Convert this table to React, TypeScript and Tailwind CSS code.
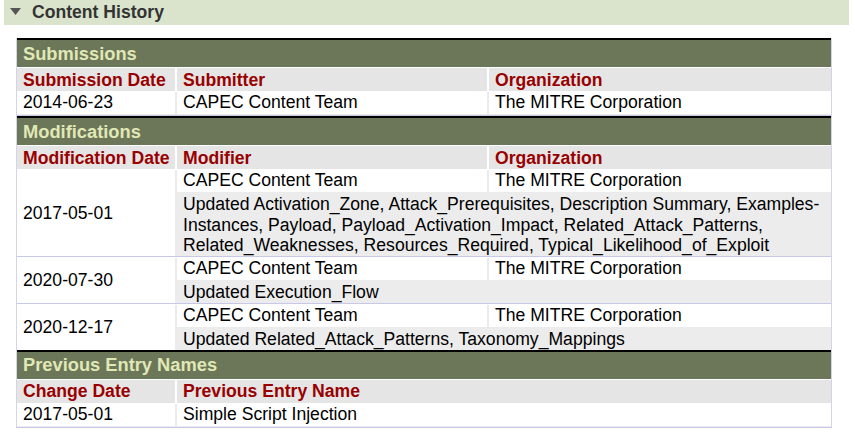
import React from "react";

const HeadCell = ({ children }: { children: React.ReactNode }) => (
  <div className="h-[23px] bg-[#e5e5e5] px-[6px] pt-[1px] flex items-center font-bold text-[#990000] whitespace-nowrap">
    {children}
  </div>
);

const Cell = ({ children, gray }: { children?: React.ReactNode; gray?: boolean }) => (
  <div className={(gray ? "bg-[#ececec]" : "bg-white") + " h-[22px] px-[6px] flex items-start whitespace-nowrap"}>
    {children}
  </div>
);

const Title = ({ children }: { children: React.ReactNode }) => (
  <div className="h-[27px] bg-[#6c7659] px-[6px] pt-[1px] flex items-center font-bold text-[18.3px] text-[#e0e8b6]">
    {children}
  </div>
);

const ModGroup = ({ date, comment, last }: { date: string; comment: string; last?: boolean }) => (
  <div className={"grid grid-cols-[158px_654px] gap-x-[2px] bg-[#ebebeb] " + (last ? "" : "border-b border-[#c8c8e8]")}>
    <div className="bg-white px-[6px] flex items-center">{date}</div>
    <div className="flex flex-col gap-y-[1px]">
      <div className="grid grid-cols-[310px_342px] gap-x-[2px]">
        <Cell>CAPEC Content Team</Cell>
        <Cell>The MITRE Corporation</Cell>
      </div>
      <div className="bg-[#ececec] px-[6px] pt-[1px] leading-[20.5px] min-h-[22px]">{comment}</div>
    </div>
  </div>
);

export default function App() {
  return (
    <div
      className="w-[855px] h-[441px] bg-white overflow-hidden text-black text-[17.6px] leading-[20.5px]"
      style={{ fontFamily: '"Liberation Sans", Arial, sans-serif' }}
    >
      <div className="ml-[4px] w-[845px] h-[25px] bg-[#dae3cb] flex items-center">
        <svg width="11" height="8" viewBox="0 0 11 8" className="ml-[6px] mt-[-2px]">
          <polygon points="0,0 11,0 5.5,7" fill="#555555" />
        </svg>
        <span className="ml-[11px] font-bold text-[#333333]">Content History</span>
      </div>

      <div className="ml-[16px] mt-[13px] w-[816px] border-x border-[#d4d4e6]">
        {/* Submissions */}
        <div className="border-t-2 border-black">
          <Title>Submissions</Title>
          <div className="grid grid-cols-[158px_310px_342px] gap-x-[2px] mt-[1px] bg-white">
            <HeadCell>Submission Date</HeadCell>
            <HeadCell>Submitter</HeadCell>
            <HeadCell>Organization</HeadCell>
          </div>
          <div className="mt-[1px] bg-[#ebebeb] pb-[1px] border-b border-[#c8c8e8]">
            <div className="grid grid-cols-[158px_310px_342px] gap-x-[2px]">
              <Cell>2014-06-23</Cell>
              <Cell>CAPEC Content Team</Cell>
              <Cell>The MITRE Corporation</Cell>
            </div>
          </div>
        </div>

        {/* Modifications */}
        <div className="border-t-2 border-black">
          <Title>Modifications</Title>
          <div className="grid grid-cols-[158px_310px_342px] gap-x-[2px] mt-[1px] bg-white">
            <HeadCell>Modification Date</HeadCell>
            <HeadCell>Modifier</HeadCell>
            <HeadCell>Organization</HeadCell>
          </div>
          <div className="mt-[1px]">
            <ModGroup
              date="2017-05-01"
              comment="Updated Activation_Zone, Attack_Prerequisites, Description Summary, Examples-Instances, Payload, Payload_Activation_Impact, Related_Attack_Patterns, Related_Weaknesses, Resources_Required, Typical_Likelihood_of_Exploit"
            />
            <div className="h-[1px]" />
            <ModGroup date="2020-07-30" comment="Updated Execution_Flow" />
            <div className="h-[1px]" />
            <ModGroup date="2020-12-17" comment="Updated Related_Attack_Patterns, Taxonomy_Mappings" last />
          </div>
        </div>

        {/* Previous Entry Names */}
        <div className="border-t-2 border-black">
          <Title>Previous Entry Names</Title>
          <div className="grid grid-cols-[158px_654px] gap-x-[2px] mt-[1px] bg-white">
            <HeadCell>Change Date</HeadCell>
            <HeadCell>Previous Entry Name</HeadCell>
          </div>
          <div className="mt-[1px] bg-[#ebebeb] pb-[1px] border-b border-[#c8c8e8]">
            <div className="grid grid-cols-[158px_654px] gap-x-[2px]">
              <Cell>2017-05-01</Cell>
              <Cell>Simple Script Injection</Cell>
            </div>
          </div>
        </div>
      </div>
    </div>
  );
}
